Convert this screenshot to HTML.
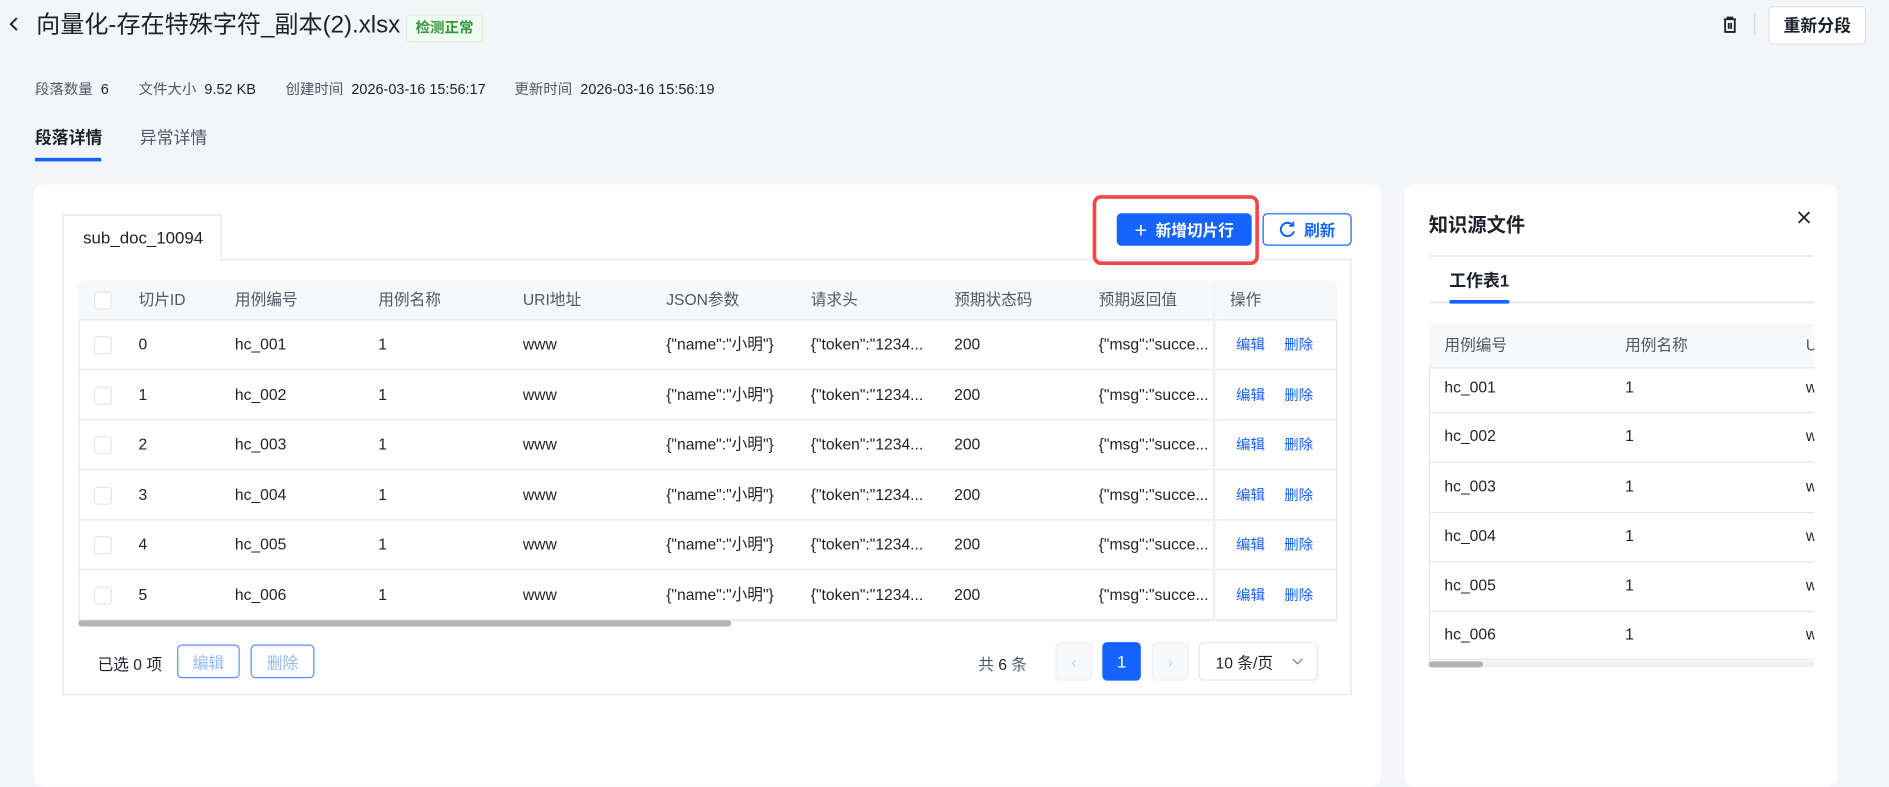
<!DOCTYPE html>
<html><head><meta charset="utf-8">
<style>
html,body{margin:0;padding:0;width:1889px;height:756px;overflow:hidden;background:#f3f5f9;}
#w{position:absolute;left:0;top:0;width:1568px;height:628px;transform:scale(1.2047);transform-origin:0 0;font-family:"Liberation Sans","Noto Sans CJK SC",sans-serif;color:#1d2129;}
.a{position:absolute;white-space:nowrap;}
.card{position:absolute;background:#fff;border-radius:8px;}
.th{color:#4e5969;font-size:13px;line-height:16px;}
.td{font-size:13px;color:#1d2129;line-height:16px;height:16px;}
.cb{position:absolute;width:13px;height:13px;border:1px solid #e5e6eb;border-radius:3px;background:#fff;}
.lnk{color:#1664ff;font-size:12px;line-height:14px;}
.row{position:absolute;left:65px;width:1045px;border-bottom:1px solid #e5e6eb;}
.rrow{position:absolute;left:1186px;width:320px;border-bottom:1px solid #e5e6eb;}
.btn{position:absolute;box-sizing:border-box;border-radius:4px;font-size:13px;display:flex;align-items:center;justify-content:center;}
</style></head><body><div id="w">
<svg class="a" style="left:7px;top:13px" width="10" height="14" viewBox="0 0 10 14"><path d="M7 2L2 7l5 5" fill="none" stroke="#1d2129" stroke-width="1.6"/></svg>
<div class="a" style="left:30px;top:8px;font-size:20px;line-height:26px;">向量化-存在特殊字符_副本(2).xlsx</div>
<div class="a" style="left:337px;top:12px;width:64px;height:23px;background:#effbef;border:1px solid #d8f2d8;border-radius:3px;box-sizing:border-box;color:#2f9a3b;font-size:12px;font-weight:bold;text-align:center;line-height:21px;">检测正常</div>
<svg class="a" style="left:1429px;top:13px" width="14" height="15" viewBox="0 0 14 15"><path d="M2 3h10M5 3V1.5h4V3M3 3.5v10h8v-10M6 6v5M8 6v5" fill="none" stroke="#1d2129" stroke-width="1.5"/></svg>
<div class="a" style="left:1456px;top:12px;width:1px;height:16px;background:#d5d8de"></div>
<div class="btn" style="left:1468px;top:5px;width:81px;height:32px;background:#fff;border:1px solid #e1e3e8;font-size:14px;font-weight:bold;">重新分段</div>
<div class="a" style="top:65px;font-size:12px;left:29px;color:#4e5969">段落数量 <span style="color:#1d2129">&nbsp;6</span></div>
<div class="a" style="top:65px;font-size:12px;left:115px;color:#4e5969">文件大小 <span style="color:#1d2129">&nbsp;9.52 KB</span></div>
<div class="a" style="top:65px;font-size:12px;left:237px;color:#4e5969">创建时间 <span style="color:#1d2129">&nbsp;2026-03-16 15:56:17</span></div>
<div class="a" style="top:65px;font-size:12px;left:427px;color:#4e5969">更新时间 <span style="color:#1d2129">&nbsp;2026-03-16 15:56:19</span></div>
<div class="a" style="left:29px;top:104px;font-size:14px;font-weight:bold;">段落详情</div>
<div class="a" style="left:29px;top:131px;width:55px;height:3px;background:#1664ff"></div>
<div class="a" style="left:116px;top:104px;font-size:14px;color:#4e5969">异常详情</div>

<div class="card" style="left:28px;top:153px;width:1118px;height:500px;"></div>
<div class="card" style="left:1166px;top:153px;width:359px;height:500px;"></div>

<div class="a" style="left:52px;top:215px;width:1070px;height:362px;border:1px solid #e5e6eb;box-sizing:border-box;"></div>
<div class="a" style="left:52px;top:178px;width:132px;height:39px;border:1px solid #e5e6eb;border-bottom:none;background:#fff;box-sizing:border-box;font-size:14px;line-height:36px;padding-left:16px;">sub_doc_10094</div>
<div class="a" style="left:907px;top:162px;width:138px;height:58px;border:3px solid #f04848;border-radius:7px;box-sizing:border-box;"></div>
<div class="btn" style="left:927px;top:177px;width:112px;height:27px;background:#1664ff;color:#fff;font-weight:bold;"><span style="font-size:18px;font-weight:normal;margin-right:7px;line-height:1">+</span>新增切片行</div>
<div class="btn" style="left:1048px;top:177px;width:74px;height:27px;border:1px solid #1664ff;color:#1664ff;font-weight:bold;background:#fff;"><svg width="15" height="15" viewBox="0 0 15 15" style="margin-right:6px"><path d="M12 4A5.5 5.5 0 1 0 13 9" fill="none" stroke="#1664ff" stroke-width="1.7"/><path d="M12.5 1v3.5H9" fill="none" stroke="#1664ff" stroke-width="1.5"/></svg>刷新</div>

<div class="a" style="left:65px;top:233px;width:1045px;height:288px;border:1px solid #e5e6eb;border-radius:4px;box-sizing:border-box;"></div>
<div class="row" style="top:233px;height:32px;background:#f7f8fa;border-radius:4px 4px 0 0"></div>
<div class="a" style="left:1007px;top:233px;width:3px;height:282px;background:linear-gradient(to right,#eef0f3,#f7f8fa)"></div>
<div class="cb" style="left:78px;top:242px"></div>
<div class="a th" style="left:115px;top:241px">切片ID</div>
<div class="a th" style="left:195px;top:241px">用例编号</div>
<div class="a th" style="left:314px;top:241px">用例名称</div>
<div class="a th" style="left:434px;top:241px">URI地址</div>
<div class="a th" style="left:553px;top:241px">JSON参数</div>
<div class="a th" style="left:673px;top:241px">请求头</div>
<div class="a th" style="left:792px;top:241px">预期状态码</div>
<div class="a th" style="left:912px;top:241px">预期返回值</div>
<div class="a th" style="left:1021px;top:241px">操作</div>

<div class="a" style="left:1186px;top:269px;width:320px;height:282px;border:1px solid #e5e6eb;border-right:none;border-radius:4px 0 0 4px;box-sizing:border-box"></div>
<div class="rrow" style="top:269px;height:36px;background:#f7f8fa;border-radius:4px 0 0 0"></div>
<div class="a th" style="left:1199px;top:279px">用例编号</div>
<div class="a th" style="left:1349px;top:279px">用例名称</div>
<div class="a th" style="left:1499px;top:279px;width:7px;overflow:hidden">URI</div>

<div id="rows"></div>
<script>
var h='';var tops=[265,307,348,390,431,473];
for(var i=0;i<6;i++){var t=tops[i];var c=t+21;
h+='<div class="row" style="top:'+t+'px;height:41px"></div>';
h+='<div class="cb" style="left:78px;top:'+(c-7)+'px"></div>';
var cells=[[115,i],[195,'hc_00'+(i+1)],[314,'1'],[434,'www'],[553,'{"name":"小明"}'],[673,'{"token":"1234...'],[792,'200'],[912,'{"msg":"succe...']];
for(var j=0;j<cells.length;j++)h+='<div class="a td" style="left:'+cells[j][0]+'px;top:'+(c-8)+'px">'+cells[j][1]+'</div>';
h+='<div class="a lnk" style="left:1026px;top:'+(c-7)+'px">编辑</div><div class="a lnk" style="left:1066px;top:'+(c-7)+'px">删除</div>';
}
var rt=[305,342,384,425,466,507];
for(var i=0;i<6;i++){var t=rt[i];var c=t+(i==0?17:20);
h+='<div class="rrow" style="top:'+t+'px;height:'+(i==0?37:(i==5?40:41))+'px"></div>';
h+='<div class="a td" style="left:1199px;top:'+(c-8)+'px">hc_00'+(i+1)+'</div><div class="a td" style="left:1349px;top:'+(c-8)+'px">1</div><div class="a td" style="left:1499px;top:'+(c-8)+'px;width:7px;overflow:hidden">www</div>';}
document.getElementById('rows').innerHTML=h;
</script>
<div class="a" style="left:1007px;top:265px;width:3px;height:250px;background:linear-gradient(to right,#e9ebef,#fff)"></div>
<div class="a" style="left:65px;top:515px;width:1045px;height:6px;background:#fff;border-top:1px solid #eee"></div>
<div class="a" style="left:65px;top:515px;width:542px;height:5px;background:#b3b3b3;border-radius:3px"></div>

<div class="a" style="left:81px;top:541px;font-size:13px;">已选 0 项</div>
<div class="btn" style="left:147px;top:535px;width:52px;height:28px;border:1px solid #5b8ff9;color:#94b8fa;background:#fff">编辑</div>
<div class="btn" style="left:208px;top:535px;width:53px;height:28px;border:1px solid #5b8ff9;color:#94b8fa;background:#fff">删除</div>
<div class="a" style="left:812px;top:541px;font-size:13px;color:#4e5969">共 <b style="font-weight:normal;color:#1d2129">6</b> 条</div>
<div class="btn" style="left:876px;top:533px;width:31px;height:32px;border:1px solid #eef0f3;background:#f7f8fa;color:#c9cdd4">‹</div>
<div class="btn" style="left:915px;top:533px;width:32px;height:32px;background:#1664ff;color:#fff;font-size:14px">1</div>
<div class="btn" style="left:956px;top:533px;width:31px;height:32px;border:1px solid #eef0f3;background:#f7f8fa;color:#c9cdd4">›</div>
<div class="btn" style="left:995px;top:533px;width:99px;height:32px;border:1px solid #e5e6eb;background:#fff;justify-content:flex-start;padding-left:13px;font-size:13px">10 条/页<svg style="margin-left:15px" width="10" height="6" viewBox="0 0 10 6"><path d="M1 1l4 4 4-4" fill="none" stroke="#86909c" stroke-width="1.2"/></svg></div>

<div class="a" style="left:1186px;top:173px;font-size:16px;font-weight:bold;">知识源文件</div>
<svg class="a" style="left:1492px;top:175px" width="11" height="11" viewBox="0 0 11 11"><path d="M1 1l9 9M10 1l-9 9" stroke="#1d2129" stroke-width="1.5"/></svg>
<div class="a" style="left:1186px;top:212px;width:320px;height:1px;background:#e0e2e6"></div>
<div class="a" style="left:1203px;top:223px;font-size:14px;font-weight:bold;">工作表1</div>
<div class="a" style="left:1186px;top:250px;width:320px;height:2px;background:#e9ecf0"></div>
<div class="a" style="left:1203px;top:249px;width:50px;height:3px;background:#1664ff;border-radius:2px"></div>
<div class="a" style="left:1186px;top:549px;width:320px;height:5px;background:#f0f1f3"></div>
<div class="a" style="left:1186px;top:549px;width:45px;height:5px;background:#b3b3b3;border-radius:3px"></div>
</div></body></html>
